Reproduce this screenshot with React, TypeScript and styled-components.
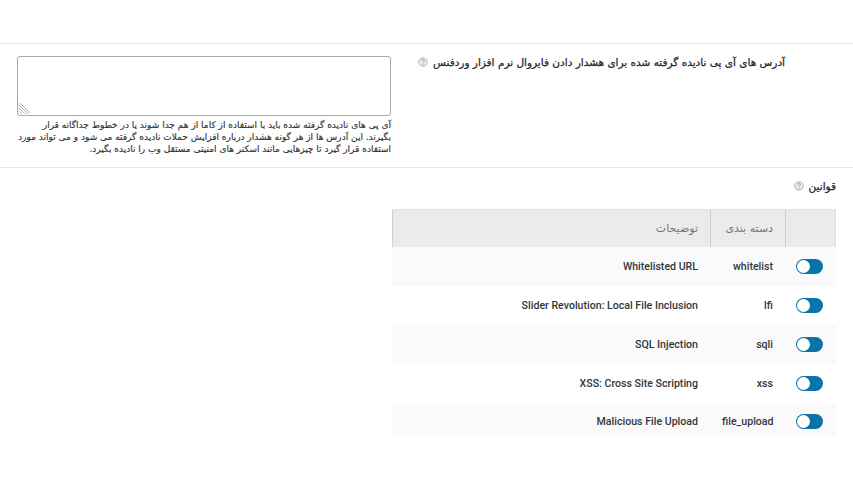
import React from 'react';
import styled, { createGlobalStyle } from 'styled-components';

const GlobalStyle = createGlobalStyle`
  html, body {
    margin: 0;
    padding: 0;
    background: #fff;
  }
  body {
    font-family: "DejaVu Sans", "Liberation Sans", sans-serif;
    color: #2c3338;
  }
`;

const Page = styled.div`
  width: 853px;
  height: 480px;
  padding-top: 43px;
  box-sizing: border-box;
  overflow: hidden;
  direction: rtl;
`;

const Section = styled.section`
  border-top: 1px solid #e6e6e6;
  height: 123px;
  display: flex;
`;

const LabelColumn = styled.div`
  width: 394px;
  margin-right: 68px;
  padding-top: 11px;
  flex: none;
  box-sizing: border-box;
`;

const FieldLabel = styled.h3`
  margin: 0;
  font-size: 10.5px;
  line-height: 14px;
  font-weight: 400;
  -webkit-text-stroke: 0.25px #23282d;
  color: #23282d;
  display: flex;
  align-items: center;
  gap: 5px;
  white-space: nowrap;
`;

const FieldColumn = styled.div`
  width: 374px;
  padding-top: 12px;
  flex: none;
`;

const TextArea = styled.div`
  position: relative;
  height: 58px;
  border: 1px solid #a9a9a9;
  border-radius: 3px;
  background: #fff;
`;

const Grip = styled.svg`
  position: absolute;
  left: 0;
  bottom: 0;
  width: 13px;
  height: 13px;
`;

const Hint = styled.p`
  margin: 4px 0 0;
  font-size: 9px;
  line-height: 11.8px;
  -webkit-text-stroke: 0.15px #333;
  color: #333;
`;

const RulesSection = styled.section`
  border-top: 1px solid #e6e6e6;
  padding: 11px 17px 0 17px;
`;

const RulesTitle = styled(FieldLabel)`
  margin-bottom: 16px;
`;

const RulesTable = styled.div`
  width: 444px;
`;

const HeadRow = styled.div`
  display: grid;
  grid-template-columns: 51px 75px 1fr;
`;

const HeadCell = styled.div`
  height: 38px;
  box-sizing: border-box;
  background: #ebebeb;
  border-top: 1px solid #e3e3e3;
  border-left: 1px solid #cfcfcf;
  padding: 0 12px;
  display: flex;
  align-items: center;
  font-size: 11px;
  color: #757575;

  &:first-child {
    border-right: 1px solid #e0e0e0;
  }
`;

const Row = styled.div<{ $striped: boolean; $last: boolean }>`
  height: ${p => (p.$last ? 34 : 39)}px;
  box-sizing: border-box;
  padding: ${p => (p.$last ? '3px 0 0' : '0 0 1px')};
  display: grid;
  grid-template-columns: 51px 75px 1fr;
  align-items: center;
  background: ${p => (p.$striped ? '#fafafa' : '#fff')};
`;

const ToggleCell = styled.div`
  display: flex;
  padding-right: 13px;
`;

const Toggle = styled.span`
  position: relative;
  display: block;
  width: 27px;
  height: 15px;
  border-radius: 8px;
  background: #0a73a8;
`;

const Knob = styled.span`
  position: absolute;
  left: 1px;
  top: 1px;
  width: 13px;
  height: 13px;
  border-radius: 50%;
  background: #fff;
`;

const Cell = styled.div`
  padding: 0 12px;
  font-family: Roboto, "Liberation Sans", sans-serif;
  font-size: 10.6px;
  font-weight: 500;
  color: #32373c;
  text-align: right;
  direction: ltr;
`;

const HelpIcon = () => (
  <svg width="10" height="10" viewBox="0 0 11 11" aria-hidden="true" style={{ flex: 'none' }}>
    <circle cx="5.5" cy="5.5" r="4.6" fill="#eeeeee" stroke="#a8a8a8" strokeWidth="1" />
    <path d="M4 4.3a1.5 1.5 0 1 1 2.3 1.3c-.5.3-.8.6-.8 1.1" fill="none" stroke="#8a8a8a" strokeWidth="0.9" />
    <circle cx="5.5" cy="8.1" r="0.55" fill="#8a8a8a" />
  </svg>
);

const rules = [
  ['whitelist', 'Whitelisted URL'],
  ['lfi', 'Slider Revolution: Local File Inclusion'],
  ['sqli', 'SQL Injection'],
  ['xss', 'XSS: Cross Site Scripting'],
  ['file_upload', 'Malicious File Upload'],
];

export default function App() {
  return (
    <Page>
      <GlobalStyle />
      <Section>
        <LabelColumn>
          <FieldLabel>
            آدرس های آی پی نادیده گرفته شده برای هشدار دادن فایروال نرم افزار وردفنس
            <HelpIcon />
          </FieldLabel>
        </LabelColumn>
        <FieldColumn>
          <TextArea>
            <Grip viewBox="0 0 13 13">
              <path d="M1 3l9 9M1 6l6 6M1 9l3 3M2 1l10 10" stroke="#9a9a9a" strokeWidth="0.8" fill="none" />
            </Grip>
          </TextArea>
          <Hint>
            آی پی های نادیده گرفته شده باید با استفاده از کاما از هم جدا شوند یا در خطوط جداگانه قرار بگیرند. این آدرس ها از هر گونه هشدار درباره افزایش حملات نادیده گرفته می شود و می تواند مورد استفاده قرار گیرد تا چیزهایی مانند اسکنر های امنیتی مستقل وب را نادیده بگیرد.
          </Hint>
        </FieldColumn>
      </Section>
      <RulesSection>
        <RulesTitle>
          قوانین
          <HelpIcon />
        </RulesTitle>
        <RulesTable>
          <HeadRow>
            <HeadCell />
            <HeadCell>دسته بندی</HeadCell>
            <HeadCell>توضیحات</HeadCell>
          </HeadRow>
          {rules.map(([category, description], i) => (
            <Row key={category} $striped={i % 2 === 0} $last={i === rules.length - 1}>
              <ToggleCell>
                <Toggle>
                  <Knob />
                </Toggle>
              </ToggleCell>
              <Cell>{category}</Cell>
              <Cell>{description}</Cell>
            </Row>
          ))}
        </RulesTable>
      </RulesSection>
    </Page>
  );
}
